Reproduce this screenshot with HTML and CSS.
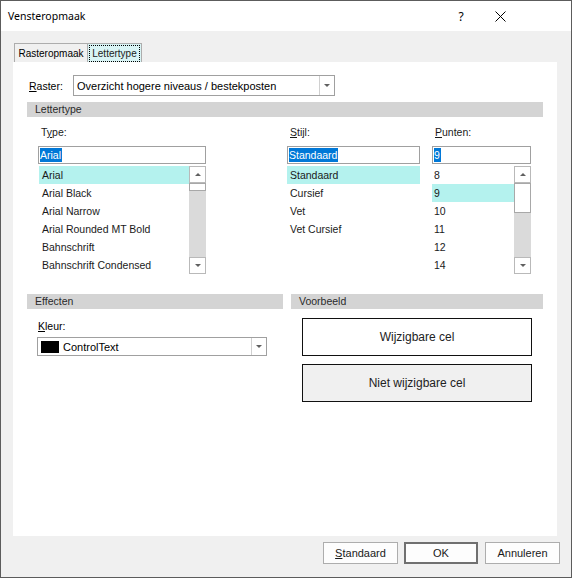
FILE: index.html
```html
<!DOCTYPE html>
<html>
<head>
<meta charset="utf-8">
<title>Vensteropmaak</title>
<link rel="stylesheet" href="styles.css">
</head>
<body>
<div class="window">
  <div class="titlebar">
    <span class="title">Vensteropmaak</span>
    <span class="help">?</span>
    <span class="close"><svg width="11" height="11" viewBox="0 0 11 11"><path d="M0.5 0.5L10.5 10.5M10.5 0.5L0.5 10.5" stroke="#000" stroke-width="1" fill="none"/></svg></span>
  </div>
  <div class="body">
    <div class="tabs">
      <div class="tab">Rasteropmaak</div>
      <div class="tab active"><span class="focus">Lettertype</span></div>
    </div>
    <div class="panel">
      <div class="raster-row">
        <span class="lbl-raster"><u>R</u>aster:</span>
        <div class="combo raster-combo">
          <span class="combo-text">Overzicht hogere niveaus / bestekposten</span>
          <span class="combo-btn"><i class="arrow-down"></i></span>
        </div>
      </div>
      <div class="section-bar full">Lettertype</div>
      <div class="font-cols">
        <div class="col col-type">
          <div class="col-label">T<u>y</u>pe:</div>
          <div class="edit"><span class="sel">Arial</span></div>
          <div class="list">
            <div class="items">
              <div class="item hl">Arial</div>
              <div class="item">Arial Black</div>
              <div class="item">Arial Narrow</div>
              <div class="item">Arial Rounded MT Bold</div>
              <div class="item">Bahnschrift</div>
              <div class="item">Bahnschrift Condensed</div>
            </div>
            <div class="scroll">
              <div class="sbtn"><i class="arrow-up"></i></div>
              <div class="track"><div class="thumb thumb-small"></div></div>
              <div class="sbtn"><i class="arrow-down"></i></div>
            </div>
          </div>
        </div>
        <div class="col col-stijl">
          <div class="col-label"><u>S</u>tijl:</div>
          <div class="edit"><span class="sel">Standaard</span></div>
          <div class="list">
            <div class="items">
              <div class="item hl">Standaard</div>
              <div class="item">Cursief</div>
              <div class="item">Vet</div>
              <div class="item">Vet Cursief</div>
            </div>
          </div>
        </div>
        <div class="col col-punten">
          <div class="col-label"><u>P</u>unten:</div>
          <div class="edit"><span class="sel">9</span></div>
          <div class="list">
            <div class="items">
              <div class="item">8</div>
              <div class="item hl">9</div>
              <div class="item">10</div>
              <div class="item">11</div>
              <div class="item">12</div>
              <div class="item">14</div>
            </div>
            <div class="scroll">
              <div class="sbtn"><i class="arrow-up"></i></div>
              <div class="track"><div class="thumb thumb-big"></div></div>
              <div class="sbtn"><i class="arrow-down"></i></div>
            </div>
          </div>
        </div>
      </div>
      <div class="lower">
        <div class="effects">
          <div class="section-bar">Effecten</div>
          <div class="kleur-label"><u>K</u>leur:</div>
          <div class="combo kleur-combo">
            <span class="swatch"></span>
            <span class="combo-text">ControlText</span>
            <span class="combo-btn"><i class="arrow-down"></i></span>
          </div>
        </div>
        <div class="preview">
          <div class="section-bar">Voorbeeld</div>
          <div class="cell editable">Wijzigbare cel</div>
          <div class="cell readonly">Niet wijzigbare cel</div>
        </div>
      </div>
    </div>
    <div class="buttons">
      <div class="btn"><u>S</u>tandaard</div>
      <div class="btn default">OK</div>
      <div class="btn">Annuleren</div>
    </div>
  </div>
</div>
</body>
</html>
```

FILE: styles.css
```css
html, body {
  margin: 0;
  padding: 0;
  overflow: hidden;
  background: #f0f0f0;
}

.window {
  width: 572px;
  height: 578px;
  box-sizing: border-box;
  border: 1px solid #5c5c5c;
  background: #f0f0f0;
  display: flex;
  flex-direction: column;
  font-family: "Liberation Sans", Arial, sans-serif;
  font-size: 10.5px;
  color: #000;
}

.titlebar {
  height: 30px;
  background: #fff;
  display: flex;
  align-items: center;
  padding-left: 7px;
  flex: none;
}

.title {
  font-family: "Noto Sans", Lato, sans-serif;
  font-size: 10.5px;
  color: #000;
  flex: 1;
}

.help {
  font-family: "Noto Sans", Lato, sans-serif;
  font-size: 12px;
  width: 12px;
  text-align: center;
  margin-right: 28px;
}

.close {
  display: flex;
  width: 11px;
  height: 11px;
  margin-right: 65px;
}

.body {
  flex: 1;
  display: flex;
  flex-direction: column;
  padding-top: 12px;
}

.tabs {
  display: flex;
  height: 19px;
  margin-left: 13px;
}

.tab {
  box-sizing: border-box;
  height: 19px;
  border: 1px solid #adadad;
  border-bottom: none;
  padding: 0;
  display: flex;
  align-items: center;
  background: #f0f0f0;
  width: 74px;
  justify-content: center;
  font-size: 10px;
  white-space: nowrap;
}

.tab.active {
  width: 54px;
  border-left: none;
  background: #d9f4f5;
  padding: 0 1px;
}

.tab .focus {
  border: 1px dotted #000;
  padding: 1px 0;
  line-height: 13px;
  color: #222;
  width: 100%;
  box-sizing: border-box;
  text-align: center;
}

.panel {
  background: #fff;
  margin-left: 12px;
  width: 544px;
  height: 474px;
  box-sizing: border-box;
  padding-left: 14px;
  padding-top: 13px;
}

.raster-row {
  display: flex;
  align-items: center;
  height: 21px;
}

.lbl-raster {
  width: 44px;
  margin-left: 2px;
}

.combo {
  box-sizing: border-box;
  border: 1px solid #a0a0a0;
  background: #fff;
  display: flex;
  align-items: center;
}

.raster-combo {
  width: 262px;
  height: 21px;
}

.combo-text {
  flex: 1;
  padding-left: 3px;
  white-space: nowrap;
}

.raster-combo .combo-text {
  font-size: 11px;
}

.combo-btn {
  width: 15px;
  height: 100%;
  box-sizing: border-box;
  border-left: 1px solid #d0d0d0;
  display: flex;
  align-items: center;
  justify-content: center;
}

.arrow-down {
  display: block;
  width: 0;
  height: 0;
  border-left: 3.5px solid transparent;
  border-right: 3.5px solid transparent;
  border-top: 3px solid #606060;
}

.arrow-up {
  display: block;
  width: 0;
  height: 0;
  border-left: 3.5px solid transparent;
  border-right: 3.5px solid transparent;
  border-bottom: 3px solid #606060;
}

.section-bar {
  background: #d4d4d4;
  height: 15px;
  line-height: 15px;
  padding-left: 8px;
  color: #2a2a2a;
}

.section-bar.full {
  width: 516px;
  box-sizing: border-box;
  margin-top: 6px;
}

.font-cols {
  display: flex;
  padding-left: 11px;
  margin-top: 9px;
}

.col-type { width: 168px; }
.col-stijl { width: 133px; margin-left: 81px; }
.col-punten { width: 99px; margin-left: 12px; }

.col-label {
  height: 13px;
  line-height: 13px;
  padding-left: 3px;
  color: #1a1a1a;
}

.edit {
  margin-top: 7px;
  height: 18px;
  box-sizing: border-box;
  border: 1px solid #a0a0a0;
  display: flex;
  align-items: center;
  padding-left: 1px;
}

.sel {
  background: #0078d7;
  color: #fff;
  line-height: 14px;
  padding: 0 1px 0 0;
}

.list {
  margin-top: 2px;
  height: 108px;
  display: flex;
}

.items {
  flex: 1;
  padding-left: 1px;
}

.item {
  height: 18px;
  line-height: 18px;
  padding-left: 3px;
  white-space: nowrap;
  color: #1a1a1a;
}

.col-stijl .items { padding-left: 0; }
.col-stijl .item { padding-left: 3px; }
.col-punten .items { padding-left: 0; }
.col-punten .item { padding-left: 2px; }

.item.hl {
  background: #b4f2ee;
}

.scroll {
  width: 17px;
  display: flex;
  flex-direction: column;
  background: #dadada;
}

.sbtn {
  height: 17px;
  box-sizing: border-box;
  background: #fff;
  border: 1px solid #b9b9b9;
  display: flex;
  align-items: center;
  justify-content: center;
  flex: none;
}

.track {
  flex: 1;
}

.thumb {
  background: #fff;
  border: 1px solid #a8a8a8;
  box-sizing: border-box;
}

.thumb-small { height: 8px; }
.thumb-big { height: 30px; }

.lower {
  display: flex;
  margin-top: 20px;
}

.effects {
  width: 256px;
}

.kleur-label {
  margin-top: 10px;
  padding-left: 11px;
  height: 14px;
  line-height: 14px;
}

.kleur-combo {
  margin-top: 4px;
  margin-left: 10px;
  width: 230px;
  height: 19px;
}

.swatch {
  width: 18px;
  height: 12px;
  background: #000;
  margin-left: 3px;
  flex: none;
}

.kleur-combo .combo-text {
  padding-left: 4px;
  font-size: 11px;
}

.preview {
  width: 252px;
  margin-left: 8px;
}

.cell {
  margin-left: 11px;
  width: 230px;
  height: 38px;
  box-sizing: border-box;
  border: 1px solid #111;
  display: flex;
  align-items: center;
  justify-content: center;
  font-size: 12px;
  color: #222;
}

.cell.editable {
  margin-top: 9px;
  background: #fff;
}

.cell.readonly {
  margin-top: 8px;
  background: #f0f0f0;
}

.buttons {
  display: flex;
  justify-content: flex-end;
  margin-top: 6px;
  padding-right: 11px;
  gap: 6px;
}

.btn {
  width: 75px;
  height: 22px;
  box-sizing: border-box;
  border: 1px solid #adadad;
  background: #fdfdfd;
  display: flex;
  align-items: center;
  justify-content: center;
  color: #1a1a1a;
  font-size: 11px;
}

.btn.default {
  width: 74px;
  border: 2px solid #707070;
  margin-right: 1px;
}
```
